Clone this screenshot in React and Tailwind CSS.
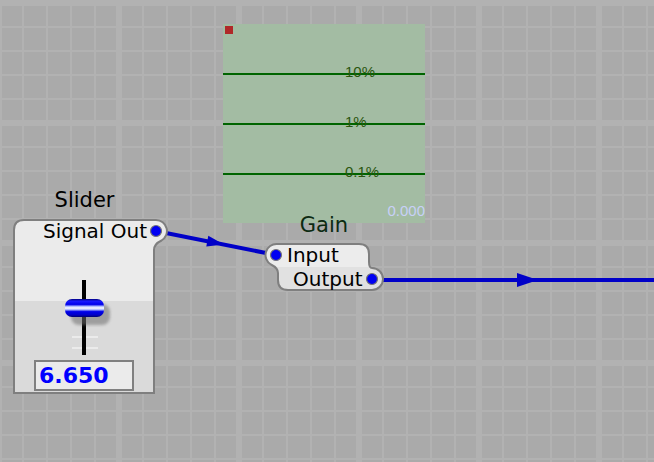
import React from 'react';

const sans = "font-['DejaVu_Sans','Verdana',sans-serif]";

// blue connection port with grey ring
const Port = ({ cx, cy }) => (
  <circle cx={cx} cy={cy} r="5.5" fill="#0000f2" stroke="#757575" strokeWidth="1.2" />
);

const GridAndWires = () => (
  <svg className="absolute inset-0" width="654" height="462">
    <defs>
      <pattern id="fine" width="24" height="24" patternUnits="userSpaceOnUse">
        <rect x="22" y="0" width="2" height="24" fill="#b2b2b2" />
        <rect x="0" y="2" width="24" height="2" fill="#b2b2b2" />
      </pattern>
      <pattern id="thick" x="56" y="-60" width="120" height="120" patternUnits="userSpaceOnUse">
        <rect x="60" y="0" width="6" height="120" fill="#b2b2b2" />
        <rect x="0" y="60" width="120" height="6" fill="#b2b2b2" />
      </pattern>
    </defs>
    <rect width="654" height="462" fill="#aaaaaa" />
    <rect width="654" height="462" fill="url(#fine)" />
    <rect width="654" height="462" fill="url(#thick)" />

    {/* slider -> gain */}
    <line x1="156" y1="231" x2="276" y2="255" stroke="#0000c8" strokeWidth="4" />
    <polygon points="206.3,246.5 208.3,235.8 224,244.6" fill="#0000c8" />
    {/* gain -> off screen */}
    <line x1="372" y1="280" x2="654" y2="280" stroke="#0000c8" strokeWidth="4" />
    <polygon points="517,273 517,287 538,280" fill="#0000c8" />
  </svg>
);

// one level marker: the line and its label share a grid cell
const Level = ({ label, className }) => (
  <div className={`grid ${className}`}>
    <div className="col-start-1 row-start-1 mt-[9px] h-[2px] self-start bg-[#006400]" />
    <span className="col-start-1 row-start-1 pl-[122px] text-[#2a560e]">{label}</span>
  </div>
);

const Scope = () => (
  <div className="absolute left-[223px] top-[24px] flex w-[202px] h-[199px] flex-col bg-[#a3bca3] font-['Liberation_Sans',Arial,sans-serif] text-[15px] leading-[15px]">
    <div className="ml-[2px] mt-[2px] w-[8px] h-[8px] bg-[#b02828]" />
    <Level label="10%" className="mt-[30px]" />
    <Level label="1%" className="mt-[35px]" />
    <Level label="0.1%" className="mt-[35px]" />
    <span className="mt-auto mb-[5px] self-end text-[#c8d0f8]">0.000</span>
  </div>
);

const SliderNode = () => (
  <div className={`absolute left-[13px] top-[190px] w-[143px] ${sans}`}>
    <div className="text-center text-[21px] leading-[21px] text-black">Slider</div>
    <div className="relative mt-[8px] h-[176px] w-[143px]">
      <svg className="absolute left-0 top-0 overflow-visible" width="143" height="176">
        <defs>
          <linearGradient id="sliderFill" x1="0" y1="0" x2="0" y2="176" gradientUnits="userSpaceOnUse">
            <stop offset="0.468" stopColor="#ebebeb" />
            <stop offset="0.468" stopColor="#dadada" />
          </linearGradient>
        </defs>
        <path
          d="M1,11 Q1,1 11,1 L143,1 A11,11 0 0 1 148.5,21.5 Q141,25 141,31 L141,174 L1,174 Z"
          fill="url(#sliderFill)"
          stroke="#7f7f7f"
          strokeWidth="2"
        />
        <Port cx="143" cy="12" />
      </svg>
      <div className="relative flex flex-col">
        <div className="pt-[2px] pr-[9px] text-right text-[20px] leading-[20px] text-black">Signal Out</div>
        <svg width="143" height="119" className="block">
          <defs>
            <linearGradient id="thumb" x1="0" y1="0" x2="0" y2="1">
              <stop offset="0" stopColor="#000080" />
              <stop offset="0.12" stopColor="#1a1aff" />
              <stop offset="0.3" stopColor="#0000ea" />
              <stop offset="0.42" stopColor="#b8c4ff" />
              <stop offset="0.5" stopColor="#ffffff" />
              <stop offset="0.58" stopColor="#b8c4ff" />
              <stop offset="0.7" stopColor="#0000ea" />
              <stop offset="0.88" stopColor="#0000c8" />
              <stop offset="1" stopColor="#000070" />
            </linearGradient>
            <filter id="soft" x="-20%" y="-40%" width="140%" height="180%">
              <feGaussianBlur stdDeviation="1.5" />
            </filter>
          </defs>
          <rect x="59" y="95" width="26" height="2" fill="#f2f2f2" opacity="0.7" />
          <rect x="59" y="106" width="26" height="2" fill="#f2f2f2" opacity="0.7" />
          <rect x="69" y="39" width="4" height="75" fill="#000" />
          <rect x="58" y="63" width="39" height="21" rx="8" fill="#6e6e6e" opacity="0.55" filter="url(#soft)" />
          <rect x="52" y="58" width="39" height="18" rx="7" fill="url(#thumb)" />
        </svg>
        <div className="ml-[21px] w-[100px] h-[31px] border-2 border-[#808080] bg-[#ebebeb] pl-[3px] text-[22px] leading-[27px] font-bold text-[#0000ff]">
          6.650
        </div>
      </div>
    </div>
  </div>
);

const GainNode = () => (
  <div className={`absolute left-[265px] top-[215px] w-[118px] ${sans}`}>
    <div className="text-center text-[21px] leading-[21px] text-[#0c2a12]">Gain</div>
    <div className="relative mt-[7px] h-[48px] w-[118px]">
      <svg className="absolute left-0 top-0 overflow-visible" width="118" height="48">
        <defs>
          <linearGradient id="gainFill" x1="0" y1="0" x2="0" y2="48" gradientUnits="userSpaceOnUse">
            <stop offset="0.5" stopColor="#ececec" />
            <stop offset="0.5" stopColor="#e1e1e1" />
          </linearGradient>
        </defs>
        <path
          d="M12,1 L94,1 Q104,1 104,11 L104,19 Q104,25 107,25 A11,11 0 0 1 118,36 A11,11 0 0 1 107,47 L23,47 Q13,47 13,37 L13,30 C13,25 9,23 6,21.5 A11,11 0 0 1 12,1 Z"
          fill="url(#gainFill)"
          stroke="#7f7f7f"
          strokeWidth="2"
        />
        <Port cx="11" cy="12" />
        <Port cx="107" cy="36" />
      </svg>
      <div className="relative flex flex-col text-[20px] leading-[20px] text-black">
        <div className="h-[24px] pt-[2px] pl-[22px]">Input</div>
        <div className="h-[24px] pt-[2px] pl-[28px]">Output</div>
      </div>
    </div>
  </div>
);

export default function App() {
  return (
    <div className="relative w-[654px] h-[462px] overflow-hidden bg-[#aaaaaa]">
      <GridAndWires />
      <Scope />
      <SliderNode />
      <GainNode />
    </div>
  );
}
